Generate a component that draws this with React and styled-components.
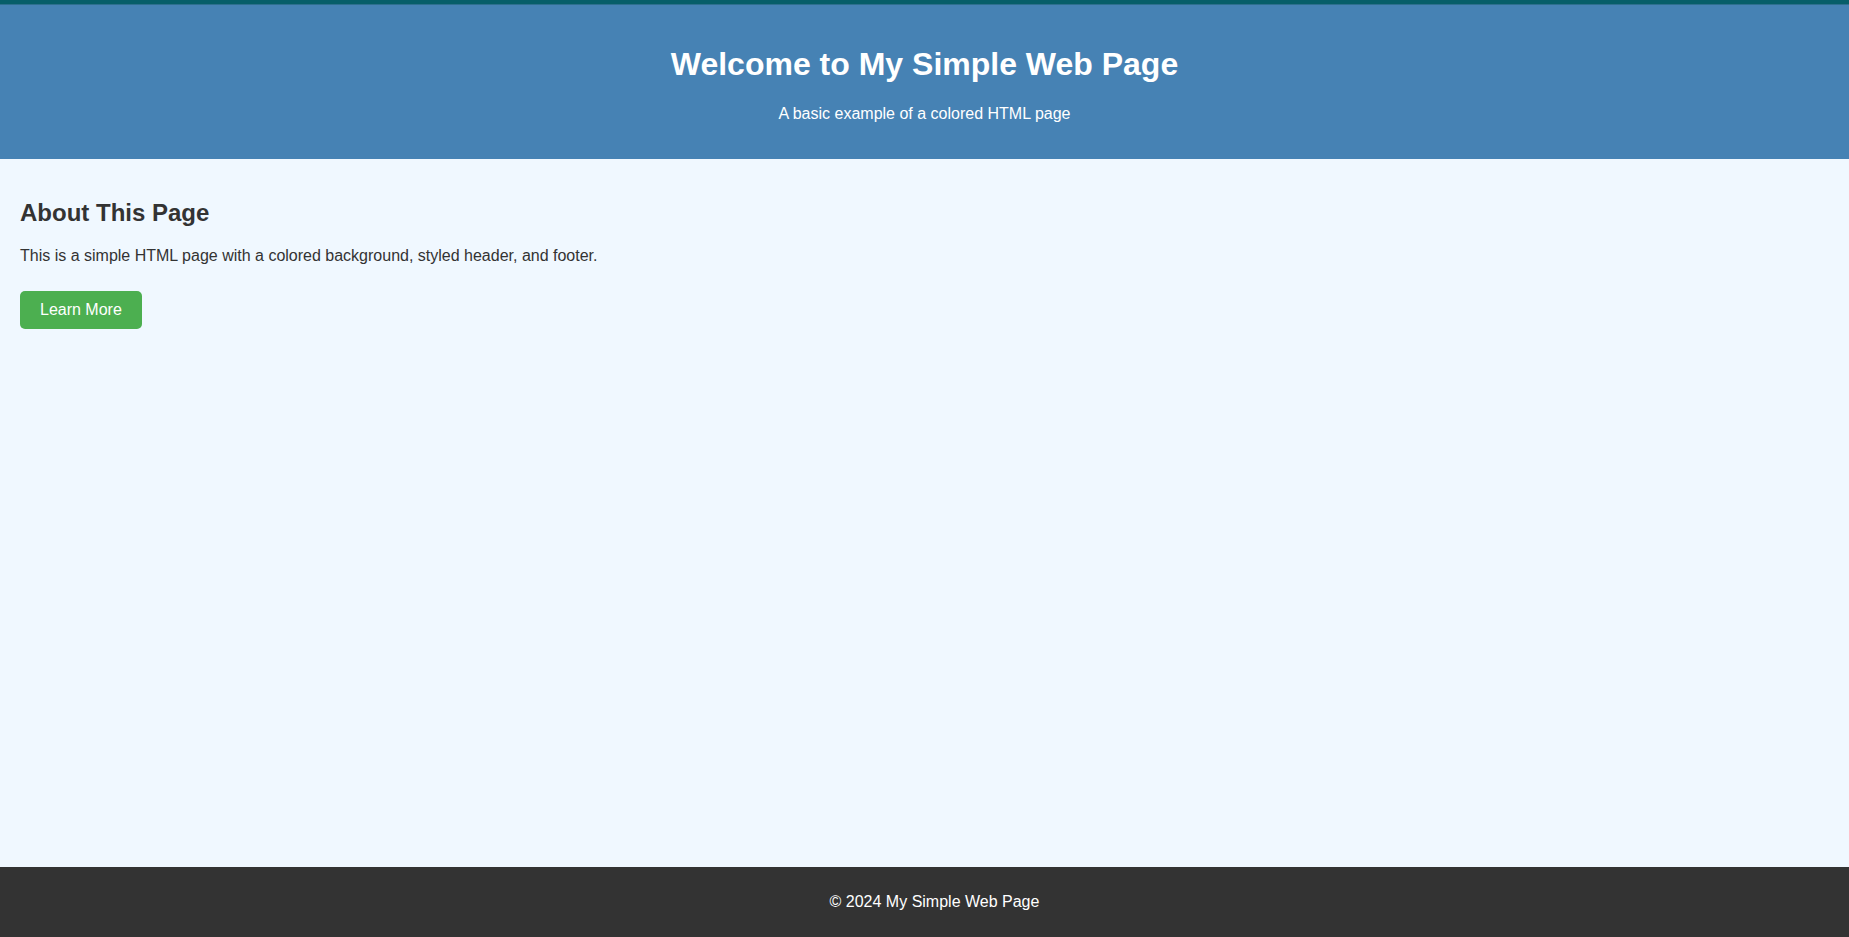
import React from "react";
import styled, { createGlobalStyle } from "styled-components";

const Global = createGlobalStyle`
  html, body { margin: 0; padding: 0; }
  body {
    font-family: "Liberation Sans", Arial, sans-serif;
    background: #f0f8ff;
    color: #333;
  }
`;

const Page = styled.div`
  min-height: 100vh;
  display: flex;
  flex-direction: column;
  overflow-x: hidden;
`;

const Header = styled.header`
  background: #4682b4;
  color: #fff;
  text-align: center;
  padding: 21px 20px 20px;
  border-top: 4px solid #075e69;
  box-shadow: inset 0 1px 0 #2e6f8e;
`;

const Title = styled.h1`
  font-size: 32px;
  margin: 21.44px 0;
  font-weight: bold;
`;

const Subtitle = styled.p`
  font-size: 16px;
  margin: 16px 0;
`;

const Main = styled.main`
  flex: 1;
  padding: 20px;
`;

const Heading = styled.h2`
  font-size: 24px;
  margin: 19.92px 0;
  color: #333;
`;

const Text = styled.p`
  font-size: 16px;
  margin: 16px 0;
`;

const Button = styled.button`
  margin-top: 10px;
  background: #4caf50;
  color: #fff;
  border: none;
  border-radius: 5px;
  padding: 10px 20px;
  font-family: "Liberation Sans", Arial, sans-serif;
  font-size: 16px;
  line-height: 18px;
  cursor: pointer;
`;

const Footer = styled.footer`
  box-sizing: content-box;
  width: 100%;
  flex-shrink: 0;
  background: #333;
  color: #fff;
  text-align: center;
  padding: 10px;
`;

const FooterText = styled.p`
  margin: 16px 0;
  font-size: 16px;
`;

export default function App() {
  return (
    <>
      <Global />
      <Page>
        <Header>
          <Title>Welcome to My Simple Web Page</Title>
          <Subtitle>A basic example of a colored HTML page</Subtitle>
        </Header>
        <Main>
          <Heading>About This Page</Heading>
          <Text>This is a simple HTML page with a colored background, styled header, and footer.</Text>
          <Button>Learn More</Button>
        </Main>
        <Footer>
          <FooterText>© 2024 My Simple Web Page</FooterText>
        </Footer>
      </Page>
    </>
  );
}
